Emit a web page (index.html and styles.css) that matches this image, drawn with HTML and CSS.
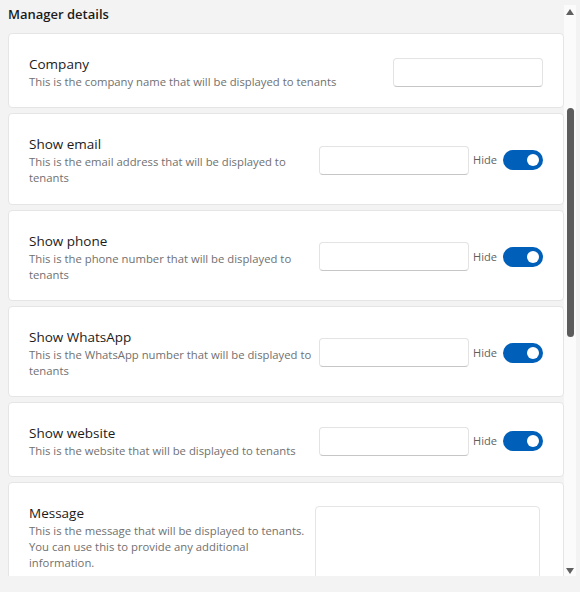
FILE: index.html
```html
<!DOCTYPE html>
<html lang="en">
<head>
<meta charset="utf-8">
<title>Manager details</title>
<link rel="stylesheet" href="styles.css">
</head>
<body>
<div class="frame">
  <div class="content">
    <h2 class="heading">Manager details</h2>
    <div class="cards">
      <div class="card">
        <div class="text">
          <div class="title">Company</div>
          <div class="desc">This is the company name that will be displayed to tenants</div>
        </div>
        <div class="controls">
          <input class="field" type="text">
        </div>
      </div>
      <div class="card">
        <div class="text">
          <div class="title">Show email</div>
          <div class="desc">This is the email address that will be displayed to tenants</div>
        </div>
        <div class="controls">
          <input class="field" type="text">
          <span class="hide">Hide</span>
          <span class="toggle"><span class="knob"></span></span>
        </div>
      </div>
      <div class="card">
        <div class="text">
          <div class="title">Show phone</div>
          <div class="desc">This is the phone number that will be displayed to tenants</div>
        </div>
        <div class="controls">
          <input class="field" type="text">
          <span class="hide">Hide</span>
          <span class="toggle"><span class="knob"></span></span>
        </div>
      </div>
      <div class="card">
        <div class="text">
          <div class="title">Show WhatsApp</div>
          <div class="desc">This is the WhatsApp number that will be displayed to tenants</div>
        </div>
        <div class="controls">
          <input class="field" type="text">
          <span class="hide">Hide</span>
          <span class="toggle"><span class="knob"></span></span>
        </div>
      </div>
      <div class="card">
        <div class="text">
          <div class="title">Show website</div>
          <div class="desc">This is the website that will be displayed to tenants</div>
        </div>
        <div class="controls">
          <input class="field" type="text">
          <span class="hide">Hide</span>
          <span class="toggle"><span class="knob"></span></span>
        </div>
      </div>
      <div class="card card-top">
        <div class="text">
          <div class="title">Message</div>
          <div class="desc">This is the message that will be displayed to tenants. You can use this to provide any additional information.</div>
        </div>
        <div class="controls">
          <textarea class="area"></textarea>
        </div>
      </div>
    </div>
  </div>
  <div class="scrollbar">
    <div class="arrow arrow-up"></div>
    <div class="track"><div class="thumb"></div></div>
    <div class="arrow arrow-down"></div>
  </div>
</div>
</body>
</html>
```

FILE: styles.css
```css
* { box-sizing: border-box; }
html, body {
  margin: 0;
  padding: 0;
}
body {
  width: 580px;
  height: 592px;
  background: #f3f3f3;
  font-family: "Open Sans", "Noto Sans", sans-serif;
  color: #1b1b1b;
  overflow: hidden;
}
.frame {
  display: flex;
  height: 576px;
  padding-right: 4px;
}
.content {
  flex: 1;
  min-width: 0;
  overflow: hidden;
  padding: 0 0 0 8px;
}
.heading {
  margin: 0;
  padding-top: 4px;
  height: 33px;
  font-size: 13px;
  font-weight: 600;
  line-height: 20px;
  color: #1b1b1b;
}
.cards {
  display: flex;
  flex-direction: column;
  gap: 5px;
}
.card {
  display: flex;
  align-items: center;
  gap: 6px;
  background: #ffffff;
  border: 1px solid #e5e5e5;
  border-radius: 4px;
  padding: 20px 20px 17.25px 20px;
}
.card-top {
  align-items: flex-start;
  padding-right: 23px;
}
.text {
  flex: 1;
  min-width: 0;
}
.title {
  font-size: 13.5px;
  line-height: 20px;
  color: #1b1b1b;
}
.desc {
  font-size: 11.3px;
  line-height: 16px;
  color: #707070;
}
.controls {
  display: flex;
  align-items: center;
  flex-shrink: 0;
}
.field {
  width: 150px;
  height: 29px;
  margin: 0;
  border: 1px solid #e3e3e3;
  border-bottom-color: #c6c6c6;
  border-radius: 4px;
  background: #ffffff;
  outline: none;
}
.hide {
  margin-left: 4px;
  font-size: 11.1px;
  color: #5f5f5f;
  line-height: 16px;
}
.toggle {
  margin-left: 6px;
  width: 40px;
  height: 20px;
  border-radius: 10px;
  background: #005fb8;
  display: flex;
  align-items: center;
  justify-content: flex-end;
  padding-right: 4px;
}
.knob {
  width: 12px;
  height: 12px;
  border-radius: 50%;
  background: #ffffff;
}
.area {
  display: block;
  width: 225px;
  height: 110px;
  margin: 3px 0 0 0;
  border: 1px solid #e5e5e5;
  border-radius: 4px;
  background: #ffffff;
  resize: none;
  outline: none;
}
.scrollbar {
  width: 12px;
  margin-top: 5px;
  background: #fbfbfb;
  display: flex;
  flex-direction: column;
  align-items: center;
}
.arrow {
  width: 0;
  height: 0;
  border-left: 4px solid transparent;
  border-right: 4px solid transparent;
}
.arrow-up {
  margin-top: 4px;
  margin-bottom: 4px;
  border-bottom: 6px solid #606060;
}
.arrow-down {
  margin-top: 4px;
  margin-bottom: 2px;
  border-top: 6px solid #606060;
}
.track {
  flex: 1;
  width: 100%;
  display: flex;
  justify-content: center;
}
.thumb {
  width: 7px;
  height: 229px;
  margin-top: 89px;
  border-radius: 4px;
  background: #5c5c5c;
}
```
